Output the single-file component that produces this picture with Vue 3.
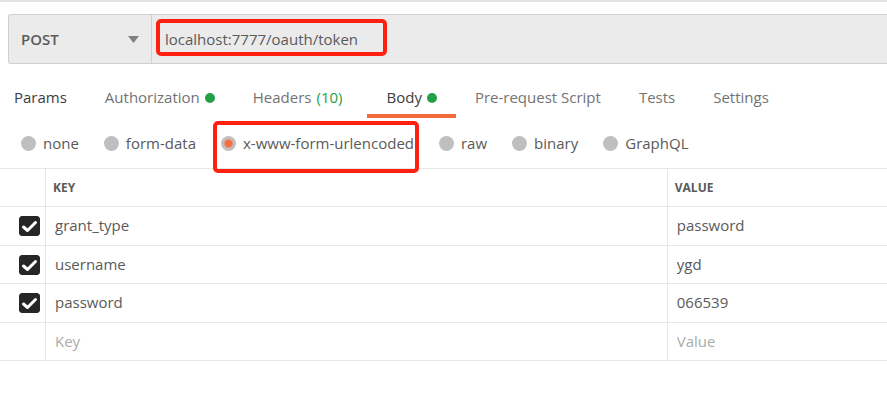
<script setup>
import { ref } from 'vue'

const method = ref('POST')
const url = ref('localhost:7777/oauth/token')

const tabs = [
  { name: 'Params', strong: true },
  { name: 'Authorization', dot: true },
  { name: 'Headers', count: '(10)' },
  { name: 'Body', dot: true, strong: true },
  { name: 'Pre-request Script' },
  { name: 'Tests' },
  { name: 'Settings' },
]
const activeTab = ref('Body')

const bodyTypes = ['none', 'form-data', 'x-www-form-urlencoded', 'raw', 'binary', 'GraphQL']
const bodyType = ref('x-www-form-urlencoded')

const rows = ref([
  { enabled: true, key: 'grant_type', value: 'password' },
  { enabled: true, key: 'username', value: 'ygd' },
  { enabled: true, key: 'password', value: '066539' },
])
const draft = ref({ key: '', value: '' })
</script>

<template>
  <main class="request">
    <form class="request-bar" @submit.prevent>
      <div class="method">
        <select v-model="method" aria-label="Method">
          <option>POST</option>
          <option>GET</option>
          <option>PUT</option>
          <option>DELETE</option>
        </select>
        <svg class="caret" viewBox="0 0 11 7" aria-hidden="true"><path d="M0 0H11L5.5 7Z" /></svg>
      </div>
      <div class="url">
        <input v-model="url" type="text" aria-label="Request URL" spellcheck="false" />
        <span class="mark mark-url"></span>
      </div>
    </form>

    <nav class="tabs">
      <button
        v-for="tab in tabs"
        :key="tab.name"
        type="button"
        class="tab"
        :class="{ active: tab.name === activeTab, strong: tab.strong }"
        @click="activeTab = tab.name"
      >
        {{ tab.name }}
        <span v-if="tab.count" class="count">{{ tab.count }}</span>
        <span v-if="tab.dot" class="dot"></span>
      </button>
    </nav>

    <div class="types" role="radiogroup" aria-label="Body type">
      <label v-for="type in bodyTypes" :key="type" class="type">
        <input v-model="bodyType" type="radio" name="body-type" :value="type" />
        <span>{{ type }}</span>
        <span v-if="type === 'x-www-form-urlencoded'" class="mark mark-type"></span>
      </label>
    </div>

    <table class="params">
      <colgroup>
        <col class="col-check" />
        <col class="col-key" />
        <col />
      </colgroup>
      <thead>
        <tr>
          <th></th>
          <th>KEY</th>
          <th>VALUE</th>
        </tr>
      </thead>
      <tbody>
        <tr v-for="(row, i) in rows" :key="i">
          <td>
            <label class="check">
              <input v-model="row.enabled" type="checkbox" :aria-label="row.key" />
              <svg v-if="row.enabled" viewBox="0 0 21 20" aria-hidden="true">
                <path d="M4.5 11L8.5 14.5L16.5 6.5" />
              </svg>
            </label>
          </td>
          <td><input v-model="row.key" class="cell" type="text" aria-label="Key" spellcheck="false" /></td>
          <td><input v-model="row.value" class="cell" type="text" aria-label="Value" spellcheck="false" /></td>
        </tr>
        <tr>
          <td></td>
          <td><input v-model="draft.key" class="cell" type="text" placeholder="Key" aria-label="New key" /></td>
          <td><input v-model="draft.value" class="cell" type="text" placeholder="Value" aria-label="New value" /></td>
        </tr>
      </tbody>
    </table>
  </main>
</template>

<style>
body {
  background: #fff;
}
</style>

<style scoped>
*,
*::before,
*::after {
  box-sizing: border-box;
}

.request {
  border-top: 2px solid #e3e3e3;
  padding-top: 12px;
  overflow: hidden;
  color: #5a5a5a;
  font: 15px/20px 'Open Sans', 'Noto Sans', sans-serif;
}

input,
select,
button {
  margin: 0;
  padding: 0;
  border: 0;
  outline: 0;
  background: transparent;
  color: inherit;
  font: inherit;
}

.request-bar {
  display: flex;
  height: 50px;
  margin-left: 8px;
  border: 1px solid #d0d0d0;
  border-right: 0;
  border-radius: 3px 0 0 3px;
  background: #ebebeb;
}

.method {
  display: grid;
  flex: none;
  align-items: center;
  width: 143px;
  border-right: 1px solid #d0d0d0;
}

.method select,
.caret {
  grid-area: 1 / 1;
}

.method select {
  height: 100%;
  padding-left: 12px;
  appearance: none;
  font-weight: 600;
}

.caret {
  justify-self: end;
  width: 11px;
  height: 7px;
  margin-right: 12px;
  fill: #808080;
  pointer-events: none;
}

.url {
  position: relative;
  display: flex;
  flex: 1;
}

.url input {
  flex: 1;
  min-width: 0;
  padding: 0 13px;
}

.mark {
  position: absolute;
  border: 4px solid #ff2012;
  border-radius: 5px;
  pointer-events: none;
}

.mark-url {
  top: 4px;
  left: 4px;
  width: 231px;
  height: 37px;
}

.tabs {
  display: flex;
  gap: 38px;
  height: 54px;
  padding-left: 14px;
}

.tab {
  position: relative;
  display: flex;
  align-items: center;
  gap: 5px;
  padding-top: 12px;
  color: #737373;
  white-space: nowrap;
}

.tab.strong {
  color: #3c3c3c;
}

.tab.active::after {
  content: '';
  position: absolute;
  right: -19px;
  bottom: 0;
  left: -19px;
  height: 4px;
  background: #f26b3a;
}

.count {
  margin-right: 6px;
  color: #24a148;
}

.dot {
  width: 10px;
  height: 10px;
  margin-top: 2px;
  border-radius: 50%;
  background: #24a148;
}

.types {
  display: flex;
  gap: 25px;
  height: 50px;
  padding-left: 21px;
}

.type {
  position: relative;
  display: flex;
  align-items: center;
  gap: 7px;
  white-space: nowrap;
}

.type input {
  flex: none;
  width: 15px;
  height: 15px;
  border-radius: 50%;
  appearance: none;
  background: #bfbfbf;
}

.type input:checked {
  background: radial-gradient(circle, #f76b3c 3px, #bfbfbf 5px);
}

.mark-type {
  top: 3px;
  right: -5px;
  left: -8px;
  height: 52px;
}

.params {
  width: 100%;
  border-spacing: 0;
  border-top: 1px solid #e6e6e6;
  table-layout: fixed;
}

.col-check {
  width: 46px;
}

.col-key {
  width: 70.1%;
}

th,
td {
  height: 38px;
  padding: 0;
  border-right: 1px solid #e6e6e6;
  border-bottom: 1px solid #e6e6e6;
  text-align: left;
}

th:last-child,
td:last-child {
  border-right: 0;
}

tbody tr:nth-child(odd) td {
  height: 39px;
}

tbody tr:last-child td {
  height: 38px;
}

th {
  padding-left: 7px;
  font-size: 12px;
  font-weight: 700;
}

.cell {
  display: block;
  width: 100%;
  height: 22px;
  padding: 0 9px 2px;
}

.cell::placeholder {
  color: #ababab;
  opacity: 1;
}

.check {
  display: grid;
  width: 21px;
  height: 20px;
  margin-left: 19px;
}

.check input,
.check svg {
  grid-area: 1 / 1;
  width: 21px;
  height: 20px;
}

.check input {
  border: 1px solid #262626;
  border-radius: 3px;
  appearance: none;
}

.check input:checked {
  background: #262626;
}

.check svg {
  fill: none;
  stroke: #fff;
  stroke-linecap: round;
  stroke-linejoin: round;
  stroke-width: 3;
  pointer-events: none;
}
</style>
